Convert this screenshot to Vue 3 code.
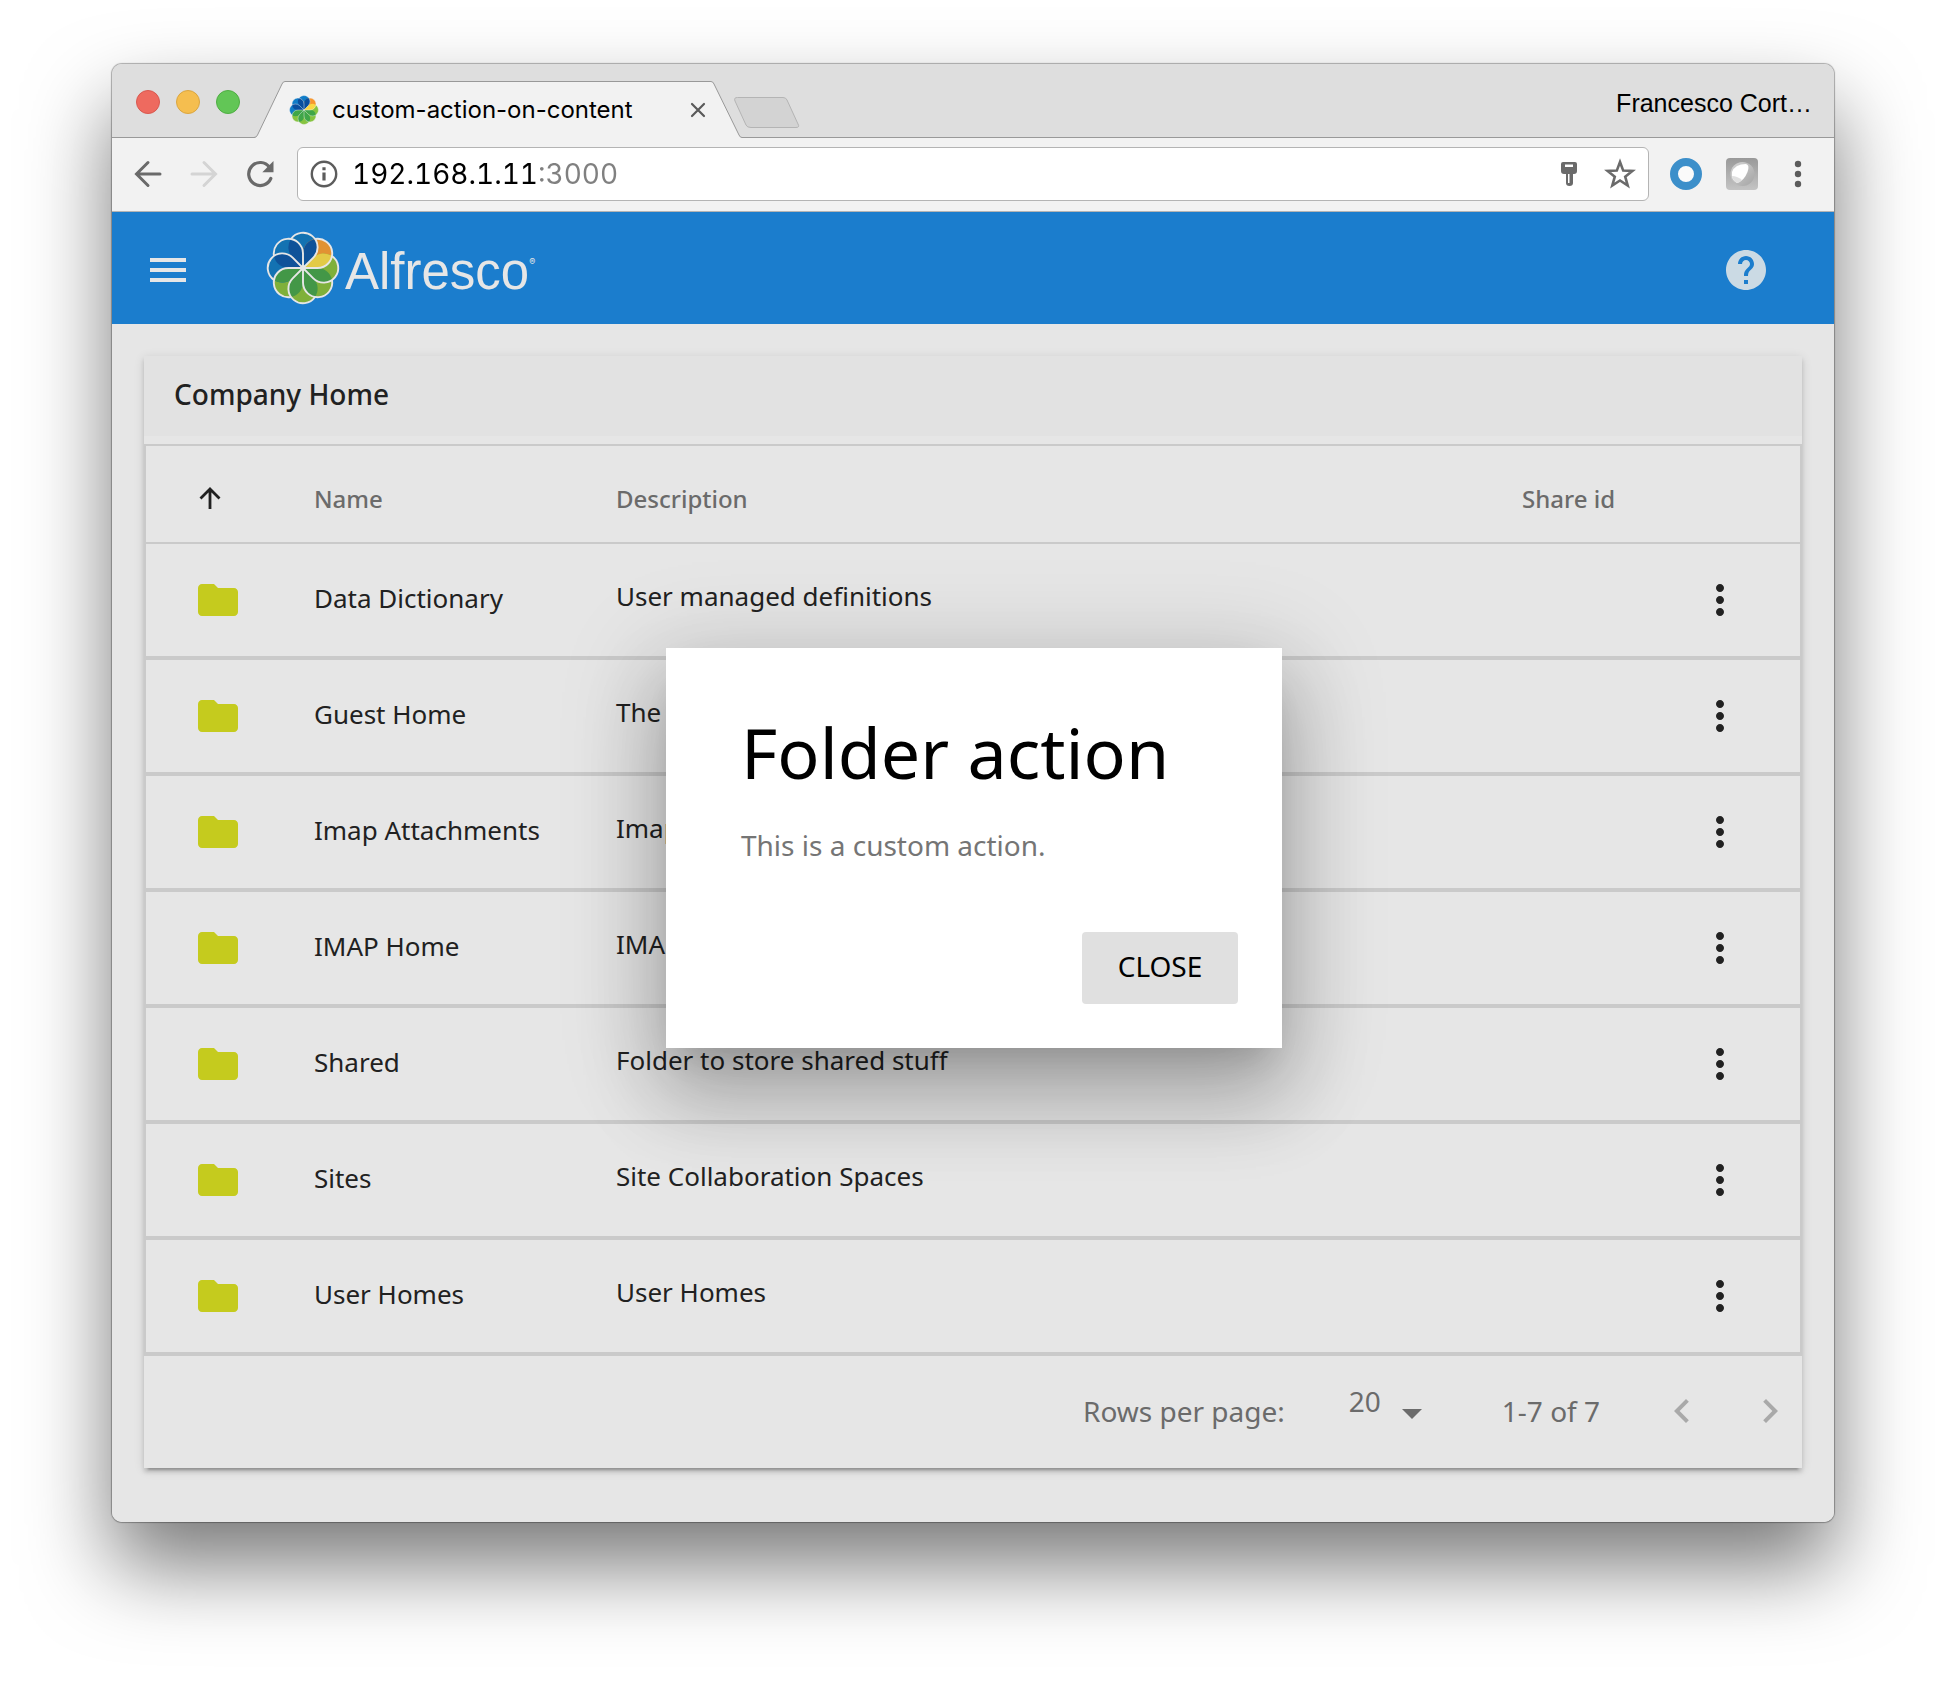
<script setup>
import { ref } from 'vue'

const rows = [
  { name: 'Data Dictionary', description: 'User managed definitions' },
  { name: 'Guest Home', description: 'The guest root space' },
  { name: 'Imap Attachments', description: 'Imap Attachments' },
  { name: 'IMAP Home', description: 'IMAP Home' },
  { name: 'Shared', description: 'Folder to store shared stuff' },
  { name: 'Sites', description: 'Site Collaboration Spaces' },
  { name: 'User Homes', description: 'User Homes' }
]

// Petals of the Alfresco flower, clockwise from the top one
const headerPetals = [
  { light: '#1372b2', dark: '#0f5299' },
  { light: '#e19233', dark: '#e3ca47' },
  { light: '#7fb03a', dark: '#439747' },
  { light: '#7fb03a', dark: '#439747' },
  { light: '#7fb03a', dark: '#439747' },
  { light: '#7fb03a', dark: '#439747' },
  { light: '#1372b2', dark: '#0f5299' },
  { light: '#1372b2', dark: '#0f5299' }
]
const tabPetals = [
  { light: '#0f7cc8', dark: '#0a4f9e' },
  { light: '#f7962d', dark: '#fbd743' },
  { light: '#86c440', dark: '#3fa648' },
  { light: '#86c440', dark: '#3fa648' },
  { light: '#86c440', dark: '#3fa648' },
  { light: '#86c440', dark: '#3fa648' },
  { light: '#0f7cc8', dark: '#0a4f9e' },
  { light: '#0f7cc8', dark: '#0a4f9e' }
]

const petalPath = 'M0 0L-7.07 -7.07A10 10 0 1 1 7.07 -7.07Z'
const overlapPath = 'M0 0L0 -10A10 10 0 0 1 8.22 -19.84A10 10 0 0 1 7.07 -7.07Z'
const outlinePath = 'M-8.22 -19.84A10 10 0 1 1 7.07 -7.07L0 0'

const address = ref('192.168.1.11:3000')
const pageSize = ref('20')
const dialogOpen = ref(true)
</script>

<template>
  <div class="desktop">
    <div class="window">
      <header class="tab-strip">
        <div class="lights">
          <button class="light red" aria-label="Close window"></button>
          <button class="light yellow" aria-label="Minimize window"></button>
          <button class="light green" aria-label="Zoom window"></button>
        </div>
        <div class="tab">
          <svg class="tab-shape" viewBox="0 0 488 57" aria-hidden="true">
            <path d="M0 57L1 56.500Q2.500 56 3.500 54L28 3Q29 0.500 31 0.500H457Q459 0.500 460 3L485 54Q486 56.500 488 56.500V57Z" fill="#f2f2f2" />
            <path d="M0 56.500Q2.500 56.500 3.500 54L28 3Q29 0.500 31 0.500H457Q459 0.500 460 3L485 54Q486 56.500 488 56.500" fill="none" stroke="#999" />
          </svg>
          <svg class="favicon" viewBox="-25 -25 50 50" aria-hidden="true">
            <path v-for="(p, i) in tabPetals" :key="'l' + i" :d="petalPath" :fill="p.light" :transform="`rotate(${i * 45})`" />
            <path v-for="(p, i) in tabPetals" :key="'d' + i" :d="overlapPath" :fill="p.dark" :transform="`rotate(${i * 45})`" />
            <path v-for="(p, i) in tabPetals" :key="'o' + i" :d="outlinePath" fill="none" stroke="#f2f2f2" stroke-opacity=".7" stroke-width="1" :transform="`rotate(${i * 45})`" />
          </svg>
          <span class="tab-title">custom-action-on-content</span>
          <button class="tab-close" aria-label="Close tab">
            <svg width="16" height="16" viewBox="0 0 16 16"><path d="M2 2L14 14M14 2L2 14" stroke="#5a5a5a" stroke-width="2.200" stroke-linecap="round" /></svg>
          </button>
        </div>
        <button class="new-tab" aria-label="New tab">
          <svg width="68" height="34" viewBox="0 0 68 34"><path d="M4.500 1.500H50Q53 1.500 54 4L65 28Q67 31.500 63 31.500H18Q14 31.500 13 29L2 5Q0.500 1.500 4.500 1.500Z" fill="#d3d3d3" stroke="#b4b4b4" /></svg>
        </button>
        <button class="profile">Francesco Cort…</button>
      </header>

      <nav class="toolbar">
        <button class="nav-btn" aria-label="Back">
          <svg width="30" height="30" viewBox="0 0 30 30"><path d="M27 15H4M15 3.500L3.500 15L15 26.500" fill="none" stroke="#6a6a6a" stroke-width="3" stroke-linecap="round" /></svg>
        </button>
        <button class="nav-btn" aria-label="Forward" disabled>
          <svg width="30" height="30" viewBox="0 0 30 30"><path d="M3 15H26M15 3.500L26.500 15L15 26.500" fill="none" stroke="#d4d4d4" stroke-width="3" stroke-linecap="round" /></svg>
        </button>
        <button class="nav-btn" aria-label="Reload">
          <svg width="30" height="30" viewBox="0 0 30 30"><path d="M24.500 8.200A11.500 11.500 0 1 0 25.800 19.500" fill="none" stroke="#6a6a6a" stroke-width="3.200" stroke-linecap="round" /><path d="M28.500 2V13.200H17.300Z" fill="#6a6a6a" /></svg>
        </button>
        <div class="address-bar">
          <button class="icon-btn" aria-label="Site information">
            <svg width="28" height="28" viewBox="0 0 28 28"><circle cx="14" cy="14" r="12.200" fill="none" stroke="#5c5c5c" stroke-width="2.400" /><path d="M12.400 12.400H15.600V20.500H12.400ZM12.400 7.200H15.600V10.200H12.400Z" fill="#5c5c5c" /></svg>
          </button>
          <input v-model="address" class="address" type="text" aria-label="Address" spellcheck="false" />
          <div class="address-tools">
            <button class="icon-btn" aria-label="Saved passwords">
              <svg width="30" height="30" viewBox="0 0 30 30"><path fill-rule="evenodd" d="M9 3H21Q23 3 23 5V12Q23 15 20 15H19V24Q19 27 15.500 27Q12 27 12 24V15H10Q7 15 7 12V5Q7 3 9 3ZM11 5.500V8H19V5.500ZM14 15V24H15.500V15Z" fill="#6a6a6a" /></svg>
            </button>
            <button class="icon-btn" aria-label="Bookmark this page">
              <svg width="32" height="32" viewBox="0 0 32 32"><path d="M16 4L19.200 12.600L28.400 13L21.200 18.700L23.700 27.500L16 22.500L8.300 27.500L10.800 18.700L3.600 13L12.800 12.600Z" fill="none" stroke="#6a6a6a" stroke-width="2.600" /></svg>
            </button>
          </div>
        </div>
        <button class="icon-btn" aria-label="Ring extension">
          <svg width="32" height="32" viewBox="0 0 32 32"><circle cx="16" cy="16" r="12" fill="#fafafa" stroke="#3c8fca" stroke-width="8" /></svg>
        </button>
        <button class="icon-btn" aria-label="Sphere extension">
          <svg width="32" height="32" viewBox="0 0 32 32">
            <defs>
              <linearGradient id="tile" x1="0" y1="0" x2="0" y2="1"><stop offset="0" stop-color="#999" /><stop offset="1" stop-color="#c4c4c4" /></linearGradient>
              <linearGradient id="ball" x1="0" y1="0" x2="1" y2="1"><stop offset="0" stop-color="#d6d6d6" /><stop offset="1" stop-color="#a4a4a4" /></linearGradient>
            </defs>
            <rect width="32" height="32" rx="4" fill="url(#tile)" />
            <circle cx="16.500" cy="16" r="12" fill="url(#ball)" />
            <path d="M6 14Q9 6 20 6Q24 7 21.500 14Q18 23 11 25Q5 22 6 14Z" fill="#fff" />
            <path d="M6 18Q11 18 16 22Q13 25 11 25Q7 23 6 18Z" fill="#e0e0e0" />
          </svg>
        </button>
        <button class="icon-btn" aria-label="Browser menu">
          <svg width="32" height="32" viewBox="0 0 32 32" fill="#5c5c5c"><circle cx="16" cy="6" r="3.200" /><circle cx="16" cy="16" r="3.200" /><circle cx="16" cy="26" r="3.200" /></svg>
        </button>
      </nav>

      <div class="page">
        <header class="app-bar">
          <button class="icon-btn" aria-label="Open menu">
            <svg width="48" height="48" viewBox="0 0 24 24" fill="#e6e6e6"><path d="M3 18h18v-2H3v2zm0-5h18v-2H3v2zm0-7v2h18V6H3z" /></svg>
          </button>
          <a class="brand" href="#" aria-label="Alfresco">
            <svg class="flower" viewBox="-26 -26 52 52" aria-hidden="true">
              <path v-for="(p, i) in headerPetals" :key="'l' + i" :d="petalPath" :fill="p.light" :transform="`rotate(${i * 45})`" />
              <path v-for="(p, i) in headerPetals" :key="'d' + i" :d="overlapPath" :fill="p.dark" :transform="`rotate(${i * 45})`" />
              <path v-for="(p, i) in headerPetals" :key="'o' + i" :d="outlinePath" fill="none" stroke="#e6e6e6" stroke-width="1.300" stroke-linejoin="round" :transform="`rotate(${i * 45})`" />
              <circle r="1.800" fill="#e6e6e6" />
            </svg>
            <span class="wordmark">Alfresco</span><span class="registered">®</span>
          </a>
          <button class="icon-btn help" aria-label="Help">
            <svg width="48" height="48" viewBox="0 0 24 24" fill="#cbdae4"><path d="M12 2C6.480 2 2 6.480 2 12s4.480 10 10 10 10-4.480 10-10S17.520 2 12 2zm1 17h-2v-2h2v2zm2.070-7.750l-.9.920C13.450 12.900 13 13.500 13 15h-2v-.5c0-1.100.45-2.100 1.170-2.830l1.240-1.260c.37-.36.590-.86.590-1.410 0-1.100-.9-2-2-2s-2 .9-2 2H8c0-2.210 1.790-4 4-4s4 1.790 4 4c0 .88-.36 1.680-.93 2.250z" /></svg>
          </button>
        </header>

        <main class="content">
          <section class="card">
            <h1 class="card-title">Company Home</h1>
            <table class="documents">
              <colgroup>
                <col class="col-icon" />
                <col class="col-name" />
                <col />
                <col class="col-share" />
                <col class="col-actions" />
              </colgroup>
              <thead>
                <tr>
                  <th class="icon-cell" aria-label="Type">
                    <svg width="32" height="32" viewBox="0 0 32 32"><path d="M16 26V7M6.500 15.500L16 6L25.500 15.500" fill="none" stroke="#212121" stroke-width="2.800" /></svg>
                  </th>
                  <th>Name</th>
                  <th>Description</th>
                  <th>Share id</th>
                  <th aria-label="Actions"></th>
                </tr>
              </thead>
              <tbody>
                <tr v-for="row in rows" :key="row.name">
                  <td class="icon-cell">
                    <svg width="48" height="48" viewBox="0 0 24 24" fill="#c5cb1e"><path d="M10 4H4c-1.100 0-1.990.9-1.990 2L2 18c0 1.100.9 2 2 2h16c1.100 0 2-.9 2-2V8c0-1.100-.9-2-2-2h-8l-2-2z" /></svg>
                  </td>
                  <td class="name">{{ row.name }}</td>
                  <td class="description">{{ row.description }}</td>
                  <td></td>
                  <td class="actions">
                    <button class="icon-btn" :aria-label="'Actions for ' + row.name">
                      <svg width="48" height="48" viewBox="0 0 24 24" fill="#212121"><path d="M12 8c1.100 0 2-.9 2-2s-.9-2-2-2-2 .9-2 2 .9 2 2 2zm0 2c-1.100 0-2 .9-2 2s.9 2 2 2 2-.9 2-2-.9-2-2-2zm0 6c-1.100 0-2 .9-2 2s.9 2 2 2 2-.9 2-2-.9-2-2-2z" /></svg>
                    </button>
                  </td>
                </tr>
              </tbody>
            </table>
            <footer class="pagination">
              <label for="page-size">Rows per page:</label>
              <span class="page-size">
                <select id="page-size" v-model="pageSize">
                  <option>5</option>
                  <option>10</option>
                  <option>20</option>
                </select>
                <svg width="20" height="10" viewBox="0 0 20 10" aria-hidden="true"><path d="M0 0H20L10 10Z" fill="#6b6b6b" /></svg>
              </span>
              <span class="range">1-7 of 7</span>
              <button class="icon-btn" aria-label="Previous page">
                <svg width="48" height="48" viewBox="0 0 24 24" fill="#a9a9a9"><path d="M15.410 7.410L14 6l-6 6 6 6 1.410-1.410L10.830 12z" /></svg>
              </button>
              <button class="icon-btn" aria-label="Next page">
                <svg width="48" height="48" viewBox="0 0 24 24" fill="#a9a9a9"><path d="M10 6L8.590 7.410 13.170 12l-4.580 4.590L10 18l6-6z" /></svg>
              </button>
            </footer>
          </section>
        </main>

        <div v-if="dialogOpen" class="overlay">
          <div class="dialog" role="dialog" aria-labelledby="dialog-title">
            <h2 id="dialog-title">Folder action</h2>
            <p>This is a custom action.</p>
            <div class="dialog-actions">
              <button class="close" @click="dialogOpen = false">CLOSE</button>
            </div>
          </div>
        </div>
      </div>
    </div>
  </div>
</template>

<style>
body {
  margin: 0;
  background: #fff;
}
</style>

<style scoped>
* {
  box-sizing: border-box;
}
svg {
  display: block;
}
button {
  padding: 0;
  border: 0;
  background: none;
  font: inherit;
  color: inherit;
}
.desktop {
  padding: 64px 112px 160px;
  overflow: hidden;
}
.window {
  border-radius: 10px;
  background: #f2f2f2;
  box-shadow: 0 0 1px 1px rgba(0, 0, 0, 0.3), 0 44px 84px rgba(0, 0, 0, 0.53);
  font-family: Inter, "Liberation Sans", sans-serif;
  color: #000;
}

/* Browser chrome */
.tab-strip {
  display: flex;
  align-items: flex-end;
  height: 74px;
  padding: 0 22px 0 24px;
  border-radius: 10px 10px 0 0;
  background: linear-gradient(#999, #999) bottom / 100% 1px no-repeat #dedede;
}
.lights {
  display: flex;
  gap: 16px;
  align-self: center;
  width: 118px;
  padding-top: 2px;
}
.light {
  width: 24px;
  height: 24px;
  border-radius: 50%;
}
.red {
  background: #ee6a5f;
  border: 1px solid #d9584f;
}
.yellow {
  background: #f5be4f;
  border: 1px solid #dba640;
}
.green {
  background: #62c656;
  border: 1px solid #4fae43;
}
.tab {
  position: relative;
  display: flex;
  align-items: center;
  width: 488px;
  height: 57px;
  padding: 0 36px 0 35px;
}
.tab-shape {
  position: absolute;
  inset: 0;
  width: 488px;
  height: 57px;
}
.favicon {
  position: relative;
  width: 30px;
  height: 30px;
}
.tab-title {
  position: relative;
  flex: 1;
  margin-left: 13px;
  font-size: 24px;
  line-height: 32px;
}
.tab-close {
  position: relative;
}
.new-tab {
  margin: 0 0 8px -9px;
}
.profile {
  align-self: center;
  margin-left: auto;
  padding-top: 4px;
  font-family: "Liberation Sans", Arial, sans-serif;
  font-size: 25px;
  line-height: 32px;
}
.toolbar {
  display: flex;
  align-items: center;
  gap: 24px;
  height: 74px;
  padding: 0 20px 2px;
  border-bottom: 1px solid #b4b4b4;
}
.nav-btn {
  width: 32px;
  display: grid;
  place-items: center;
}
.address-bar {
  flex: 1;
  display: flex;
  align-items: center;
  gap: 14px;
  height: 54px;
  margin: 0 -3px;
  padding: 0 12px;
  border: 1px solid #b4b4b4;
  border-radius: 6px;
  background: #fff;
}
.address-tools {
  display: flex;
  align-items: center;
  gap: 20px;
}
.address {
  flex: 1;
  min-width: 0;
  padding: 0;
  border: 0;
  outline: 0;
  font: 28px/36px Inter, "Liberation Sans", sans-serif;
  font-variant-numeric: tabular-nums;
  color: #000;
  background: linear-gradient(90deg, #000 184px, #808080 184px);
  background-clip: text;
  -webkit-text-fill-color: transparent;
}

/* Application */
.page {
  position: relative;
  border-radius: 0 0 10px 10px;
  background: #e6e6e6;
  font-family: "Noto Sans", "Open Sans", sans-serif;
  color: #212121;
}
.app-bar {
  display: flex;
  align-items: center;
  height: 112px;
  padding: 0 64px 0 32px;
  background: #1b7dcd;
}
.app-bar .icon-btn {
  padding-top: 4px;
}
.brand {
  display: flex;
  align-items: center;
  margin-left: 73px;
  color: #e6e6e6;
  text-decoration: none;
}
.flower {
  width: 76px;
  height: 76px;
}
.wordmark {
  margin-left: 4px;
  padding-top: 8px;
  font: 51px/64px "Liberation Sans", Arial, sans-serif;
}
.registered {
  align-self: flex-start;
  font: 9px/64px Inter, sans-serif;
}
.help {
  margin-left: auto;
}
.content {
  padding: 32px 32px 54px;
}
.card {
  box-shadow: 0 4px 4px rgba(0, 0, 0, 0.14), 0 6px 2px -4px rgba(0, 0, 0, 0.2), 0 2px 10px rgba(0, 0, 0, 0.12);
  background: #e6e6e6;
}
.card-title {
  height: 80px;
  margin: 0 0 8px;
  padding: 0 30px;
  background: #e2e2e2;
  font-size: 28px;
  line-height: 76px;
  font-weight: 500;
}
.documents {
  width: 100%;
  table-layout: fixed;
  border: 2px solid #cacaca;
  border-bottom: 0;
  border-spacing: 0;
}
.col-icon {
  width: 168px;
}
.col-name {
  width: 302px;
}
.col-share {
  width: 118px;
}
.col-actions {
  width: 160px;
}
.documents th {
  height: 98px;
  padding: 10px 0 0;
  border-bottom: 2px solid #cacaca;
  font-size: 24px;
  line-height: 32px;
  font-weight: 500;
  color: #6b6b6b;
  text-align: left;
}
.documents td {
  height: 116px;
  padding: 0;
  border-bottom: 4px solid #cacaca;
  font-size: 26px;
  line-height: 36px;
  white-space: nowrap;
}
.documents .icon-cell {
  padding-left: 48px;
}
.documents .name {
  padding-bottom: 4px;
}
.documents .description {
  padding-bottom: 8px;
}
.actions .icon-btn {
  display: block;
  margin: 0 auto;
}
.pagination {
  display: flex;
  align-items: center;
  justify-content: flex-end;
  height: 112px;
  padding: 0 8px 2px 0;
  font-size: 28px;
  line-height: 36px;
  color: #6b6b6b;
}
.page-size {
  display: flex;
  align-items: flex-end;
  gap: 20px;
  margin: 0 80px 20px 64px;
}
.page-size select {
  appearance: none;
  padding: 0;
  border: 0;
  background: none;
  font: inherit;
  color: inherit;
}
.range {
  margin-right: 58px;
}
.range + .icon-btn {
  margin-right: 40px;
}
.overlay {
  position: absolute;
  inset: 0;
  display: flex;
  align-items: center;
  justify-content: center;
  padding: 0 0 38px 2px;
}
.dialog {
  width: 616px;
  padding: 60px 44px 44px 75px;
  background: #fff;
  box-shadow: 0 18px 92px 16px rgba(0, 0, 0, 0.14), 0 22px 30px -14px rgba(0, 0, 0, 0.12), 0 48px 76px 6px rgba(0, 0, 0, 0.2);
}
.dialog h2 {
  margin: 0;
  font-size: 70px;
  line-height: 88px;
  font-weight: 400;
  color: #000;
}
.dialog p {
  margin: 29px 0 67px;
  font-size: 28px;
  line-height: 40px;
  color: #757575;
}
.dialog-actions {
  display: flex;
  justify-content: flex-end;
}
.close {
  width: 156px;
  height: 72px;
  padding-bottom: 4px;
  border-radius: 4px;
  background: #e0e0e0;
  font-size: 28px;
  line-height: 36px;
  color: #000;
}
</style>
